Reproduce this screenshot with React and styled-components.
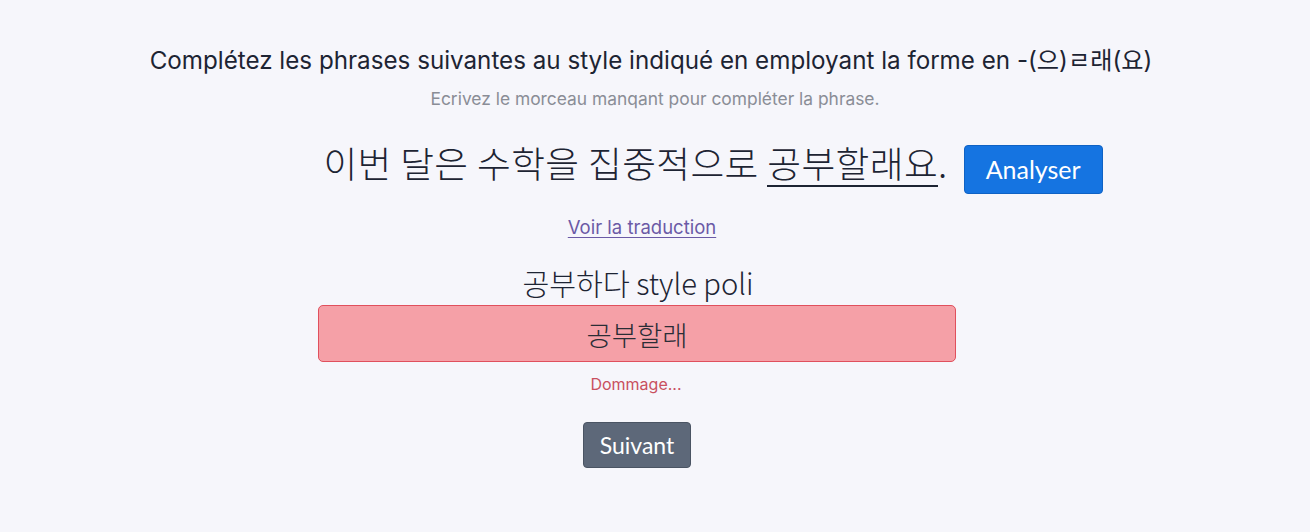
import React from 'react';
import styled, { createGlobalStyle } from 'styled-components';

const GlobalStyle = createGlobalStyle`
  html, body {
    margin: 0;
    padding: 0;
    background: #f6f6fb;
  }
  body {
    font-family: Inter, "Noto Sans CJK KR", sans-serif;
    color: #1d2433;
  }
`;

const Page = styled.main`
  width: 1310px;
  height: 532px;
  display: flex;
  flex-direction: column;
  align-items: center;
  padding-top: 44px;
  box-sizing: border-box;
`;

const Title = styled.h1`
  margin: 0 0 0 -8px;
  font-size: 24.2px;
  font-weight: 400;
  line-height: 34px;
  color: #1d2433;
`;

const Subtitle = styled.p`
  margin: 8px 0 0;
  font-size: 17.4px;
  line-height: 26px;
  color: #8a8d96;
`;

const SentenceRow = styled.div`
  display: flex;
  align-items: flex-start;
  gap: 16px;
  margin: 26px 0 0 116px;
`;

const Sentence = styled.span`
  font-family: "Noto Sans CJK KR", sans-serif;
  font-weight: 300;
  font-size: 36.7px;
  line-height: 48px;
  color: #1d2433;
  letter-spacing: 0.4px;
`;

const Blank = styled.span`
  display: inline-block;
  border-bottom: 2px solid #1d2433;
  line-height: 44px;
  padding-bottom: 1px;
`;

const Button = styled.button`
  font-family: Lato, "Open Sans", sans-serif;
  font-size: ${p => p.$fs}px;
  line-height: 1;
  color: #fff;
  background: ${p => p.$bg};
  border: 1px solid ${p => p.$border};
  border-radius: 4px;
  height: ${p => p.$h}px;
  padding: 0 ${p => p.$px}px;
  margin-top: ${p => p.$mt || 0}px;
  cursor: pointer;
`;

const Link = styled.a`
  margin-top: 21px;
  margin-left: -26px;
  font-size: 18.5px;
  line-height: 24px;
  color: #6b5aa6;
  text-decoration: underline;
  text-underline-offset: 3px;
  cursor: pointer;
`;

const Label = styled.div`
  margin-top: 25px;
  margin-left: -34px;
  font-family: "Noto Sans CJK KR", sans-serif;
  font-weight: 300;
  font-size: 29.2px;
  line-height: 36px;
  color: #1d2433;
`;

const Answer = styled.div`
  margin-top: 5px;
  margin-left: -36px;
  width: 638px;
  height: 57px;
  box-sizing: border-box;
  display: flex;
  align-items: center;
  justify-content: center;
  background: #f5a0a7;
  border: 1px solid #e0505d;
  border-radius: 5px;
  font-family: "Noto Sans CJK KR", sans-serif;
  font-weight: 300;
  font-size: 27.5px;
  color: #2a2d36;
`;

const Feedback = styled.div`
  margin-top: 10px;
  margin-left: -38px;
  font-size: 16px;
  line-height: 24px;
  color: #c9505f;
`;

const NextWrap = styled.div`
  margin-top: 26px;
  margin-left: -36px;
`;

export default function App() {
  return (
    <>
      <GlobalStyle />
      <Page>
        <Title>Complétez les phrases suivantes au style indiqué en employant la forme en -(으)ㄹ래(요)</Title>
        <Subtitle>Ecrivez le morceau manqant pour compléter la phrase.</Subtitle>
        <SentenceRow>
          <Sentence>
            이번 달은 수학을 집중적으로 <Blank>공부할래요</Blank>.
          </Sentence>
          <Button $bg="#1574e1" $border="#0f62c4" $h={49} $px={21} $fs={25} $mt={7}>Analyser</Button>
        </SentenceRow>
        <Link>Voir la traduction</Link>
        <Label>공부하다 style poli</Label>
        <Answer>공부할래</Answer>
        <Feedback>Dommage...</Feedback>
        <NextWrap>
          <Button $bg="#5d6879" $border="#4a5463" $h={46} $px={16} $fs={23}>Suivant</Button>
        </NextWrap>
      </Page>
    </>
  );
}
